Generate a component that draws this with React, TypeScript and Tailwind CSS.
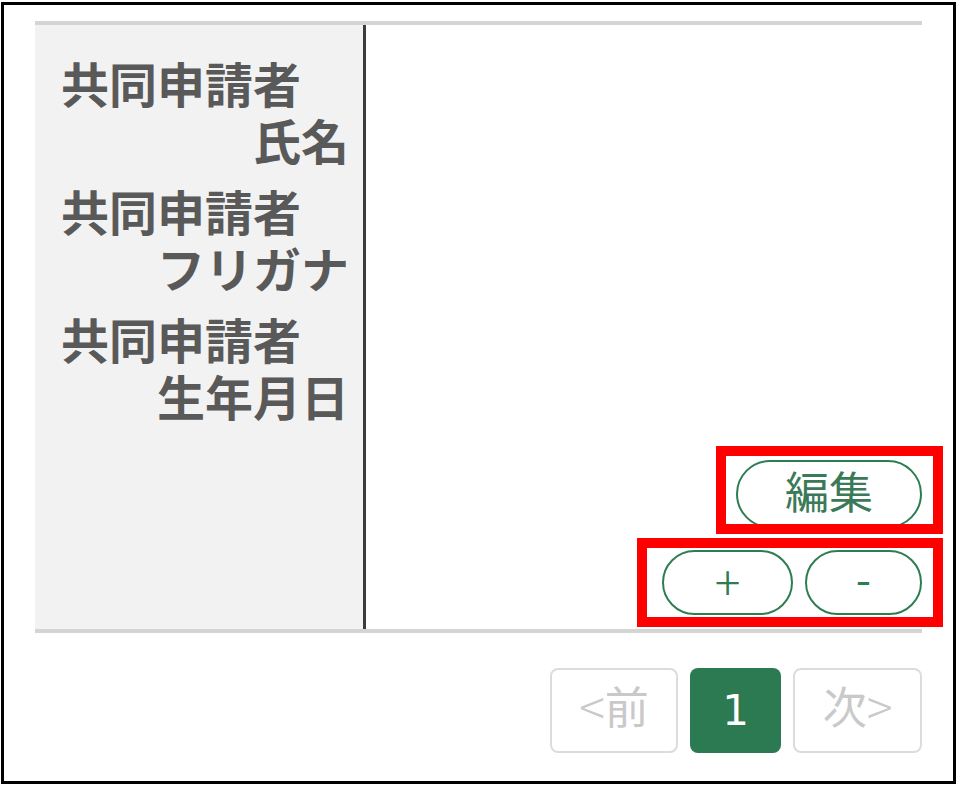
import React from "react";

const jp = { fontFamily: '"Noto Sans CJK JP", "Noto Sans", sans-serif' };

function Label({ top, bottom }: { top: string; bottom: string }) {
  return (
    <div className="py-[7px] text-[48px] leading-[57px] font-bold text-[#595959]">
      <div className="text-left whitespace-nowrap">{top}</div>
      <div className="text-right whitespace-nowrap">{bottom}</div>
    </div>
  );
}

export default function App() {
  return (
    <div className="relative w-[958px] h-[786px] bg-white" style={jp}>
      <div className="ml-[1px] mt-[2px] w-[955px] h-[782px] border-[3px] border-black bg-white">
        <div className="ml-[31px] mt-[16px] w-[887px]">
          <div className="flex h-[612px] border-t-[4px] border-b-[4px] border-[#d4d4d4]">
            <div className="w-[331px] bg-[#f2f2f2] border-r-[3px] border-[#3c3c3c] pt-[22px] pl-[26px] pr-[14px]">
              <Label top="共同申請者" bottom="氏名" />
              <Label top="共同申請者" bottom="フリガナ" />
              <Label top="共同申請者" bottom="生年月日" />
            </div>
            <div className="flex-1 flex flex-col items-end justify-end pb-[14px]">
              <button className="w-[186px] h-[68px] pb-[8px] rounded-full border-2 border-[#2e7d52] text-[44px] leading-none text-[#3b7a58] flex items-center justify-center">
                編集
              </button>
              <div className="mt-[22px] flex gap-[12px]">
                <button className="w-[131px] h-[65px] pb-[6px] rounded-full border-2 border-[#2e7d52] text-[48px] font-light leading-none text-[#2e7d52] flex items-center justify-center">
                  +
                </button>
                <button className="w-[117px] h-[65px] pb-[12px] rounded-full border-2 border-[#2e7d52] text-[44px] leading-none text-[#2e7d52] flex items-center justify-center">
                  -
                </button>
              </div>
            </div>
          </div>
          <div className="mt-[35px] flex justify-end gap-[12px]">
            <div className="w-[128px] h-[85px] pb-[12px] rounded-[8px] border-2 border-[#dcdcdc] text-[44px] leading-none text-[#c9c9c9] flex items-center justify-center">
              <span className="text-[48px] font-light">&lt;</span>前
            </div>
            <div
              className="w-[91px] h-[85px] rounded-[8px] bg-[#2b7a52] text-[42px] leading-none text-white flex items-center justify-center"
              style={{ fontFamily: '"DejaVu Sans", sans-serif' }}
            >
              1
            </div>
            <div className="w-[129px] h-[85px] pb-[12px] rounded-[8px] border-2 border-[#dcdcdc] text-[44px] leading-none text-[#c9c9c9] flex items-center justify-center">
              次<span className="text-[48px] font-light">&gt;</span>
            </div>
          </div>
        </div>
      </div>
      <div className="absolute left-[716px] top-[444px] w-[227px] h-[88px] border-[10px] border-[#ff0000]" />
      <div className="absolute left-[637px] top-[536px] w-[306px] h-[89px] border-[10px] border-[#ff0000]" />
    </div>
  );
}
